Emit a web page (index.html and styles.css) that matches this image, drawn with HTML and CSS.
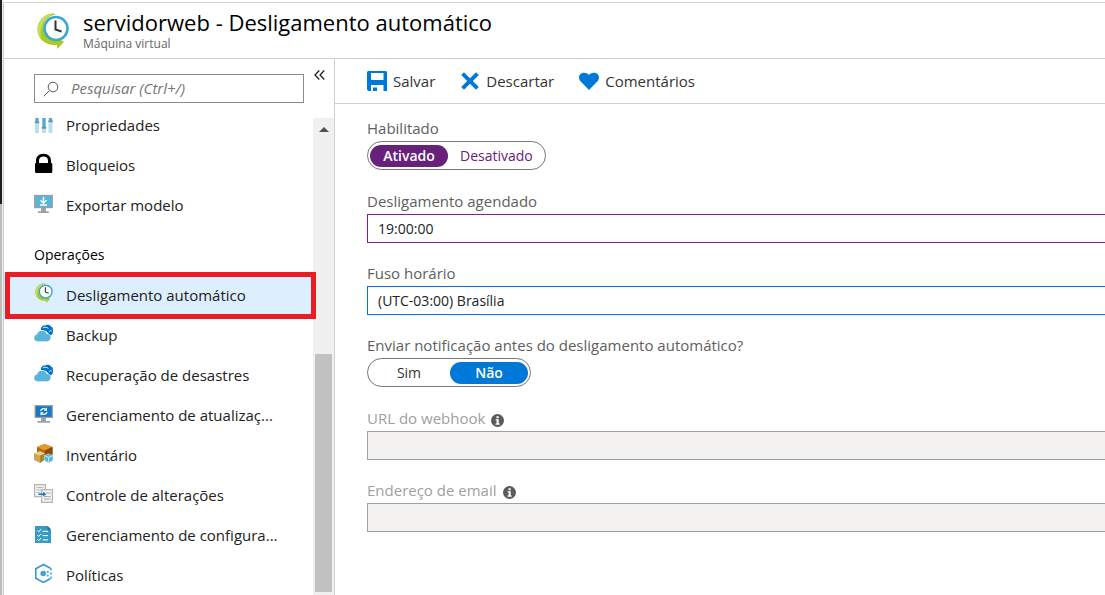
FILE: index.html
```html
<!DOCTYPE html>
<html lang="pt-BR">
<head>
<meta charset="utf-8">
<meta name="viewport" content="width=device-width, initial-scale=1">
<title>servidorweb - Desligamento automático</title>
<link rel="stylesheet" href="styles.css">
</head>
<body>
<svg class="defs" aria-hidden="true">
  <symbol id="clock" viewBox="0 0 32 36">
    <path d="M17 .5C7 .5.5 8 .5 16.500c0 8 6 14.500 15.500 15.500h4v4l7-7-7-5v3.500c-7-.5-13.500-5-13.500-12.500C6.500 8.500 11 3 18.500 1.500z" fill="#a9cc22"/>
    <path d="M17 .5C7 .5.5 8 .5 16.500c0 4 1.500 7.500 4 10.500C1.500 16 6 5 17 .5z" fill="#c3dd5c"/>
    <circle cx="19" cy="15.500" r="11.500" fill="#fff" stroke="#3ea5d4" stroke-width="2.600"/>
    <path d="M18.500 7.500v9l6 2" fill="none" stroke="#333" stroke-width="2"/>
  </symbol>
  <symbol id="clouds" viewBox="0 0 20 20">
    <path d="M6.500 6.500C7 3.500 9.500 2 12 2.200c1.500-.8 4-.5 5 1.300 1.500.5 2.300 2 1.800 3.500.8 1.800 0 4.500-2.300 5.500L12 8z" fill="#0072c6"/>
    <path d="M9 4.800c1.800-1 4-.6 5.300.6M15 8.800c.8-1 1.800-1.300 2.800-.8" fill="none" stroke="#fff" stroke-width=".9"/>
    <path d="M4 18.500c-2.300 0-4-1.500-4-3.500s1.300-3.200 3-3.400C3.500 9 5.500 7.500 8 7.500c2.300 0 4 1.200 4.600 3.200 2.400-.2 4.200 1.600 4.200 3.900s-1.700 3.900-3.900 3.900z" fill="#59b4d9" stroke="#fff" stroke-width=".3"/>
  </symbol>
  <symbol id="info" viewBox="0 0 13 13">
    <circle cx="6.500" cy="6.500" r="6.500" fill="#5a5a5a"/>
    <path d="M5.500 2.200h2.200v2H5.500zM4.600 5.200h3.100v4.300h1v1.200H4.500V9.500h1.100V6.400h-1z" fill="#fff"/>
  </symbol>
</svg>

<div class="shell">
  <div class="edge"></div>
  <div class="blade">
    <header class="header">
      <svg class="header-icon"><use href="#clock"/></svg>
      <div>
        <h1 class="title">servidorweb - Desligamento automático</h1>
        <p class="subtitle">Máquina virtual</p>
      </div>
    </header>

    <div class="content">
      <aside class="sidebar">
        <div class="search-row">
          <label class="search">
            <svg class="search-icon" viewBox="0 0 16 16" aria-hidden="true"><circle cx="10" cy="6" r="4.800"/><path d="M6.500 9.500.7 15.200"/></svg>
            <input class="search-input" type="text" placeholder="Pesquisar (Ctrl+/)" aria-label="Pesquisar">
          </label>
          <button class="collapse" type="button" aria-label="Recolher menu">
            <svg class="collapse-icon" viewBox="0 0 11 10"><path d="M5.300.5 1 5l4.300 4.500M10.300.5 6 5l4.300 4.500"/></svg>
          </button>
        </div>

        <div class="menu">
          <nav class="nav">
            <a class="item" href="#">
              <svg class="icon" viewBox="0 0 20 20"><path d="M1 5h4v15H1zM8 5h4v15H8zM14.500 5h4v15h-4z" fill="#b8dfee"/><path d="M1.500 5h3v4h-3zM8.500 5h3v10h-3zM15 5h3v3h-3z" fill="#4baed3"/><path d="M.8 8.500h4.500v1.800H.8zM7.700 14h4.600v1.800H7.700zM14.300 7.500h4.500v1.800h-4.500z" fill="#8a8a8a"/></svg>
              <span class="item-text">Propriedades</span></a>
            <a class="item" href="#">
              <svg class="icon" viewBox="0 0 20 20"><path d="M2 10V7.500C2 3.500 5 .7 9.500.7S17 3.500 17 7.500V10h.3q1 0 1 1v7.500q0 1.500-1.500 1.500H2.500Q1 20 1 18.500V11q0-1 1-1zm3 0h9V7.500C14 5 12 3.500 9.500 3.500S5 5 5 7.500z" fill="#000"/></svg>
              <span class="item-text">Bloqueios</span></a>
            <a class="item" href="#">
              <svg class="icon" viewBox="0 0 20 20"><path d="M0 1.800h19v13.400H0z" fill="#a0a1a2"/><path d="M1.300 3h16.400v11H1.300z" fill="#59b4d9"/><path d="M7 15h5v3.200h2.800V20H4v-1.800h3z" fill="#a0a1a2"/><path d="M9.500 4v6M6.500 7.300l3 3 3-3M6 12h7" fill="none" stroke="#fff" stroke-width="1.400"/></svg>
              <span class="item-text">Exportar modelo</span></a>

            <h2 class="group">Operações</h2>

            <a class="item item-active" href="#" aria-current="page">
              <svg class="icon"><use href="#clock"/></svg>
              <span class="item-text">Desligamento automático</span></a>
            <a class="item" href="#">
              <svg class="icon"><use href="#clouds"/></svg>
              <span class="item-text">Backup</span></a>
            <a class="item" href="#">
              <svg class="icon"><use href="#clouds"/></svg>
              <span class="item-text">Recuperação de desastres</span></a>
            <a class="item" href="#">
              <svg class="icon" viewBox="0 0 20 20"><path d="M.5 2h18.500v13H.5z" fill="#a0a1a2"/><path d="M1.700 3.200h16v10.600h-16z" fill="#1577c9"/><path d="M7 15h5v3h4v1.700H3.500V18H7z" fill="#a0a1a2"/><path d="M6.700 8.200C7 6 9.500 4.900 11.500 6.100M12.900 8.800c-.3 2.300-2.900 3.300-4.800 2.100" fill="none" stroke="#fff" stroke-width="1.200"/><path d="M13 4.300v3.500H9.800zM6.500 12.700V9.200h3.300z" fill="#fff"/></svg>
              <span class="item-text">Gerenciamento de atualizaç...</span></a>
            <a class="item" href="#">
              <svg class="icon" viewBox="0 0 20 20"><path d="M10.500 1 3 4v8l7.500 3.500L18.500 12V4z" fill="#b56a12"/><path d="M3 4l7.500-3 8 3-7.800 3.500z" fill="#e8962a"/><path d="M10.700 7.500 18.500 4v8l-7.800 3.500z" fill="#8c4a08"/><path d="M0 10.500l6-2.200 5 2.200v6L6 20l-6-3z" fill="#c9a85a"/><path d="M0 10.500l6-2.200 5 2.200-5 2z" fill="#e8d08c"/><path d="M6 12.500l5-2v6L6 20z" fill="#a88438"/><path d="M10.500 12.500l4-1.700 4.500 1.700v5L14.500 20l-4-2.500z" fill="#59b4d9" stroke="#fff" stroke-width=".4"/><path d="M10.800 12.700l3.800 1.700 4-1.700M14.600 14.400v5" fill="none" stroke="#d8f0fa" stroke-width=".9"/></svg>
              <span class="item-text">Inventário</span></a>
            <a class="item" href="#">
              <svg class="icon" viewBox="0 0 20 20"><path d="M.6 1.600h10.800v12H.6z" fill="#f2f2f2" stroke="#b5b5b5" stroke-width="1.200"/><path d="M2.500 4.500h7M2.500 7h7M2.500 9.500h4" stroke="#bbb" stroke-width="1.200"/><path d="M7.600 6.600h10.800v12.800H7.600z" fill="#f2f2f2" stroke="#b5b5b5" stroke-width="1.200"/><path d="M12 10h4.500M10 13.500h6.500M10 16h6.500" stroke="#aaa" stroke-width="1.200"/><path d="M4.500 10.400H9V8.800l3.300 2.400L9 13.600V12H4.500z" fill="#1577c9"/></svg>
              <span class="item-text">Controle de alterações</span></a>
            <a class="item" href="#">
              <svg class="icon" viewBox="0 0 20 20"><path d="M1 3h12.500L17 6.500V20H1z" fill="#3999c6"/><path d="M13.500 3 17 6.500h-3.500z" fill="#1c6a94"/><path d="M3.300 7.500l1.400 1.400 2.300-2.700M3.300 12l1.400 1.400L7 10.700M3.300 16.300l1.400 1.400L7 15M8.500 8.300H14M8.500 12.600H14M8.500 16.900H14" fill="none" stroke="#fff" stroke-width="1"/></svg>
              <span class="item-text">Gerenciamento de configura...</span></a>
            <a class="item" href="#">
              <svg class="icon" viewBox="0 0 20 20"><path d="M16.500 5.300 9.500 1.500l-7.700 4.300v9.400l7.700 4.300 7-4" fill="none" stroke="#3999c6" stroke-width="1.600"/><circle cx="9.200" cy="10.500" r="2.800" fill="#3ea5d4"/><path d="M12.700 8h2v2h-2zM12.700 11.500h2v2h-2zM16 5.300h2v2h-2zM16 9.600h2v2h-2zM16 13.500h2v2h-2z" fill="#59b4d9"/></svg>
              <span class="item-text">Políticas</span></a>
          </nav>
          <div class="scrollbar" aria-hidden="true">
            <svg class="scroll-arrow" viewBox="0 0 10 5"><path d="M0 5 5 0l5 5z"/></svg>
            <div class="thumb"></div>
          </div>
        </div>
      </aside>

      <main class="main">
        <div class="toolbar">
          <button class="command" type="button">
            <svg class="command-icon" viewBox="0 0 20 20"><path d="M1 0h18l1 1v19h-3.500v-6H4v6H1.500L0 18.500V1zm3 2v7h12.500V2zm2 14.500h4V20H6z" fill-rule="evenodd"/></svg>Salvar</button>
          <button class="command" type="button">
            <svg class="command-icon" viewBox="0 0 20 20"><path d="M4 1.200l6 6 6-6L18.800 4l-6 6 6 6-2.800 2.800-6-6-6 6L1.200 16l6-6-6-6z"/></svg>Descartar</button>
          <button class="command" type="button">
            <svg class="command-icon" viewBox="0 0 20 20"><path d="M10 19 1.700 10.600C-.5 8.300-.5 5 1.500 3.100 3.800 1 7.800 1.100 10 4c2.200-2.900 6.200-3 8.500-.9 2 1.900 2 5.200-.2 7.500z"/></svg>Comentários</button>
        </div>

        <form class="form">
          <fieldset class="field">
            <legend class="label">Habilitado</legend>
            <div class="toggle toggle-purple">
              <label class="option"><input class="radio" type="radio" name="enabled" checked><span class="segment">Ativado</span></label>
              <label class="option"><input class="radio" type="radio" name="enabled"><span class="segment">Desativado</span></label>
            </div>
          </fieldset>
          <div class="field">
            <label class="label" for="time">Desligamento agendado</label>
            <input class="box box-edited" id="time" type="text" value="19:00:00">
          </div>
          <div class="field">
            <label class="label" for="zone">Fuso horário</label>
            <select class="box box-focus" id="zone"><option>(UTC-03:00) Brasília</option></select>
          </div>
          <fieldset class="field">
            <legend class="label">Enviar notificação antes do desligamento automático?</legend>
            <div class="toggle">
              <label class="option"><input class="radio" type="radio" name="notify"><span class="segment">Sim</span></label>
              <label class="option"><input class="radio" type="radio" name="notify" checked><span class="segment">Não</span></label>
            </div>
          </fieldset>
          <div class="field">
            <label class="label label-disabled" for="webhook">URL do webhook <svg class="info"><use href="#info"/></svg></label>
            <input class="box box-disabled" id="webhook" type="text" disabled>
          </div>
          <div class="field">
            <label class="label label-disabled" for="email">Endereço de email <svg class="info"><use href="#info"/></svg></label>
            <input class="box box-disabled" id="email" type="text" disabled>
          </div>
        </form>
      </main>
    </div>
  </div>
</div>
</body>
</html>
```
FILE: styles.css
```css
* { box-sizing: border-box; }

body {
  margin: 0;
  font-family: "Open Sans", "Noto Sans", sans-serif;
  font-size: 15px;
  line-height: 20px;
  color: #222;
  background: #fff;
}

button, input, select { font: inherit; color: inherit; }

.defs { position: absolute; width: 0; height: 0; }

.shell {
  display: flex;
  height: 100vh;
  overflow: hidden;
}

.edge {
  flex: none;
  width: 3px;
  border-right: 1px solid #f0f0f0;
  background: linear-gradient(#1e1e22 204px, #bdbdbd 204px);
}

.blade {
  flex: 1;
  min-width: 0;
  display: flex;
  flex-direction: column;
  margin-top: 2px;
  border-top: 1px solid #d4d4d4;
  border-left: 1px solid #ccc;
}

.header {
  display: flex;
  align-items: center;
  gap: 14px;
  height: 56px;
  padding: 0 33px;
  border-bottom: 1px solid #d0d0d0;
}

.header-icon { width: 32px; height: 36px; }

.title {
  margin: 0;
  font-size: 22px;
  line-height: 26px;
  font-weight: 500;
  color: #000;
  white-space: nowrap;
}

.subtitle {
  margin: 0;
  font-size: 12px;
  line-height: 18px;
  color: #666;
}

.content {
  flex: 1;
  min-height: 0;
  display: flex;
}

.sidebar {
  flex: none;
  display: flex;
  flex-direction: column;
  width: 331px;
  border-right: 1px solid #d0d0d0;
}

.search-row {
  display: flex;
  gap: 10px;
  height: 46px;
  padding: 15px 9px 2px 30px;
}

.search {
  flex: 1;
  display: flex;
  align-items: center;
  gap: 12px;
  height: 29px;
  padding-left: 8px;
  border: 1px solid #8a8a8a;
}

.search-icon {
  flex: none;
  width: 16px;
  height: 16px;
  fill: none;
  stroke: #555;
}

.search-input {
  flex: 1;
  min-width: 0;
  padding: 0 0 2px;
  border: 0;
  outline: 0;
  background: none;
  font-size: 15px;
}

.search-input::placeholder { color: #767676; font-style: italic; opacity: 1; }

.collapse {
  align-self: flex-start;
  display: flex;
  width: 11px;
  padding: 0;
  margin-top: -4px;
  border: 0;
  background: none;
}

.collapse-icon {
  width: 11px;
  height: 10px;
  fill: none;
  stroke: #222;
  stroke-width: 1.300;
}

.menu {
  flex: 1;
  min-height: 0;
  display: flex;
}

.nav { flex: 1; min-width: 0; }

.item {
  position: relative;
  display: flex;
  align-items: center;
  gap: 12px;
  height: 40px;
  padding: 0 30px;
  color: #222;
  text-decoration: none;
}

.item-active { background: #dcefff; }

.item-active::after {
  content: "";
  position: absolute;
  inset: -3px -3px -4px 1px;
  border: 5px solid #ed1c24;
}

.icon {
  flex: none;
  width: 20px;
  height: 20px;
  margin-bottom: 4px;
}

.item-text { white-space: nowrap; }

.group {
  margin: 0;
  padding: 20px 30px 10px;
  font-size: 14px;
  line-height: 20px;
  font-weight: 500;
  color: #000;
}

.scrollbar {
  flex: none;
  display: flex;
  flex-direction: column;
  align-items: center;
  width: 21px;
  margin-top: 13px;
  background: #f0f0f0;
}

.scroll-arrow {
  flex: none;
  width: 10px;
  height: 5px;
  margin-top: 9px;
  fill: #505050;
}

.thumb {
  width: 17px;
  height: 50%;
  margin: auto 0 3px;
  background: #c1c1c1;
}

.main { flex: 1; min-width: 0; }

.toolbar {
  display: flex;
  gap: 25px;
  height: 45px;
  padding-left: 32px;
  border-bottom: 1px solid #d0d0d0;
}

.command {
  display: flex;
  align-items: center;
  gap: 6px;
  padding: 0;
  border: 0;
  background: none;
  color: #333;
}

.command-icon {
  flex: none;
  width: 20px;
  height: 20px;
  fill: #0078d7;
}

.form {
  display: flex;
  flex-direction: column;
  gap: 19px;
  padding: 13px 0 0 32px;
}

.field {
  display: flex;
  flex-direction: column;
  min-width: 0;
  margin: 0;
  padding: 0;
  border: 0;
}

.label {
  display: flex;
  align-items: center;
  gap: 6px;
  height: 24px;
  padding: 0 0 2px;
  color: #606060;
}

.label-disabled { color: #a0a0a0; }

.info { width: 13px; height: 13px; margin-top: 4px; }

.toggle {
  display: flex;
  gap: 2px;
  width: max-content;
  height: 29px;
  margin-bottom: 1px;
  padding: 2px;
  border: 1px solid #767676;
  border-radius: 15px;
  font-size: 14px;
}

.option { display: flex; align-items: center; }

.radio { position: absolute; opacity: 0; }

.segment {
  min-width: 78px;
  padding: 0 10px;
  border-radius: 11px;
  line-height: 22px;
  text-align: center;
  color: #333;
}

.radio:checked + .segment {
  background: #0078d7;
  color: #fff;
  font-weight: 600;
}

.toggle-purple .segment { color: #68217a; }
.toggle-purple .radio:checked + .segment { background: #68217a; }

.box {
  width: 100%;
  height: 29px;
  padding: 0 10px;
  border-style: solid;
  border-width: 1px 0 1px 1px;
  border-radius: 0;
  background: #fff;
  font-size: 14px;
  appearance: none;
}

.box-edited { border-color: #881798; }
.box-focus { border-color: #0078d7; }
.box-disabled { border-color: #a0a0a0; background: #f3f2f1; }
```
